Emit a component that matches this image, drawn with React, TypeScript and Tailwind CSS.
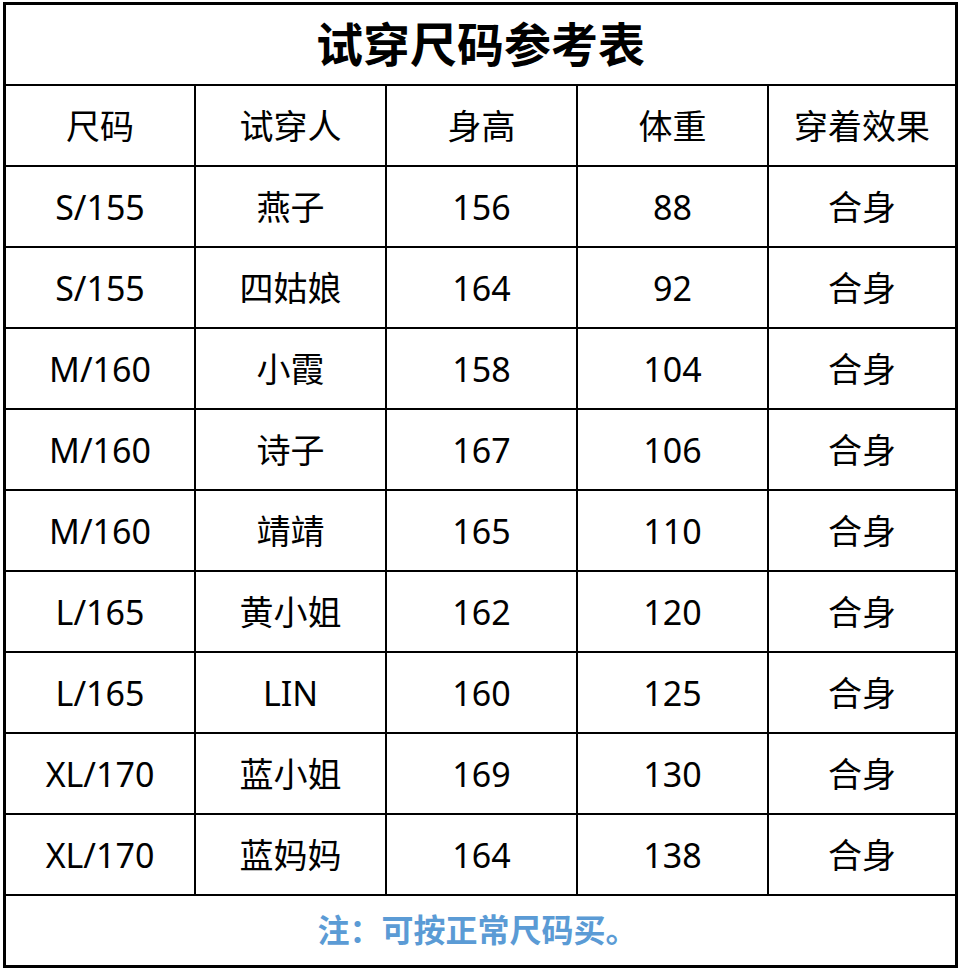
const rows = [
  ["S/155", "燕子", "156", "88", "合身"],
  ["S/155", "四姑娘", "164", "92", "合身"],
  ["M/160", "小霞", "158", "104", "合身"],
  ["M/160", "诗子", "167", "106", "合身"],
  ["M/160", "靖靖", "165", "110", "合身"],
  ["L/165", "黄小姐", "162", "120", "合身"],
  ["L/165", "LIN", "160", "125", "合身"],
  ["XL/170", "蓝小姐", "169", "130", "合身"],
  ["XL/170", "蓝妈妈", "164", "138", "合身"],
]

const headers = ["尺码", "试穿人", "身高", "体重", "穿着效果"]

function Row({ cells }: { cells: string[] }) {
  return (
    <div className="grid h-[81px] grid-cols-[190px_191px_191px_191px_1fr] border-b-2 border-black">
      {cells.map((c, i) => (
        <div
          key={i}
          className={
            "flex items-center justify-center pt-[2px] text-[34px] text-black " +
            (i < 4 ? "border-r-2 border-black" : "")
          }
        >
          {c}
        </div>
      ))}
    </div>
  )
}

export default function App() {
  return (
    <div
      className="h-[970px] w-[960px] bg-white pl-[3px] pt-[2px]"
      style={{ fontFamily: '"Noto Sans", "Noto Sans CJK SC", sans-serif' }}
    >
      <div className="flex h-[966px] w-[955px] flex-col border-[3px] border-black">
        <div className="flex h-[81px] items-center justify-center border-b-2 border-black text-[47px] font-bold text-black">
          试穿尺码参考表
        </div>
        <Row cells={headers} />
        {rows.map((r, i) => (
          <Row key={i} cells={r} />
        ))}
        <div className="flex flex-1 items-center justify-center pb-[2px] pr-[6px] text-[32px] font-bold text-[#5b9bd5]">
          注：可按正常尺码买。
        </div>
      </div>
    </div>
  )
}
